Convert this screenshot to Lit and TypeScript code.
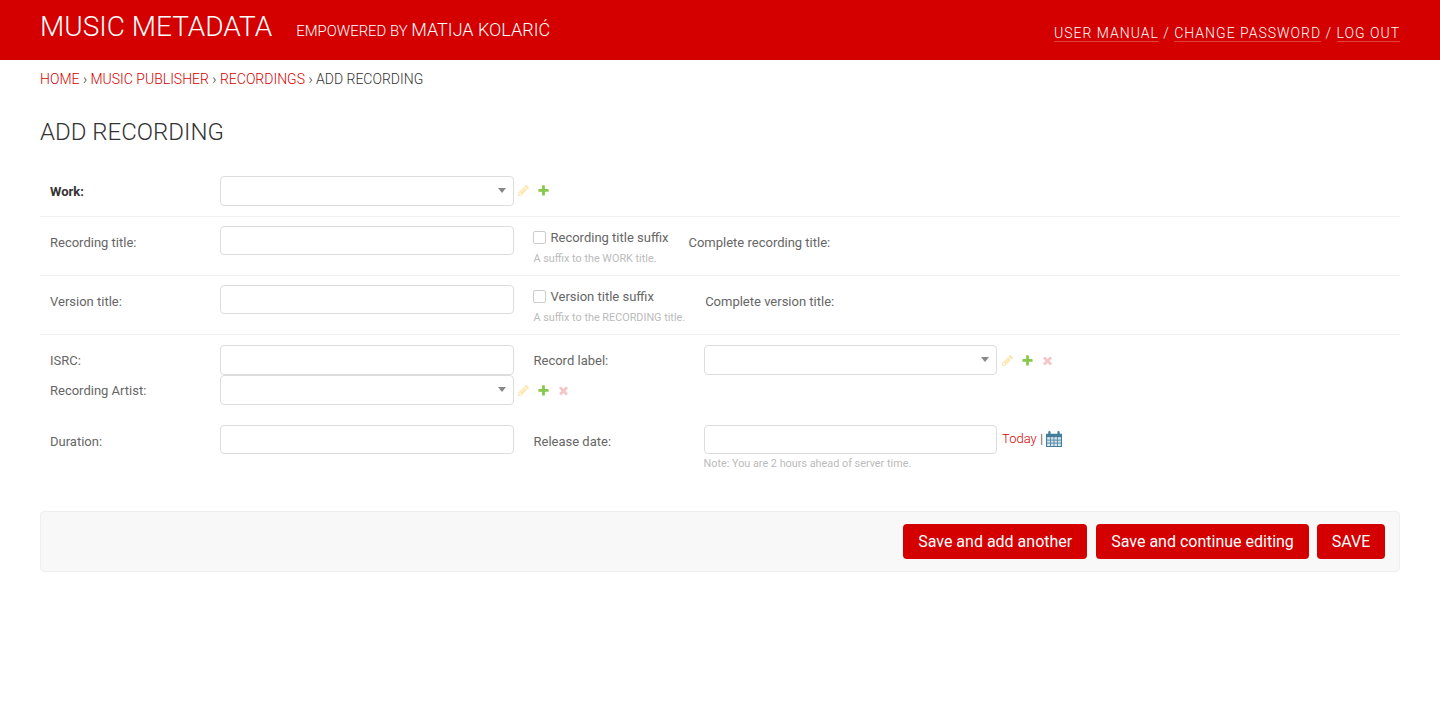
import { LitElement, html, css, svg } from "lit";
import { customElement } from "lit/decorators.js";

const pencil = svg`<path fill="#efb80b" d="M491 1536l91-91-235-235-91 91v107h128v128h107zm523-928q0-22-22-22-10 0-17 7l-542 542q-7 7-7 17 0 22 22 22 10 0 17-7l542-542q7-7 7-17zm-54-192l416 416-832 832h-416v-416zm683 96q0 53-37 90l-166 166-416-416 166-165q36-38 90-38 53 0 91 38l235 234q37 39 37 91z"/>`;
const plus = svg`<path fill="#70bf2b" d="M1600 796v192q0 40-28 68t-68 28h-416v416q0 40-28 68t-68 28h-192q-40 0-68-28t-28-68v-416h-416q-40 0-68-28t-28-68v-192q0-40 28-68t68-28h416v-416q0-40 28-68t68-28h192q40 0 68 28t28 68v416h416q40 0 68 28t28 68z"/>`;
const cross = svg`<path fill="#dd4646" d="M1490 1322q0 40-28 68l-136 136q-28 28-68 28t-68-28l-294-294-294 294q-28 28-68 28t-68-28l-136-136q-28-28-28-68t28-68l294-294-294-294q-28-28-28-68t28-68l136-136q28-28 68-28t68 28l294 294 294-294q28-28 68-28t68 28l136 136q28 28 28 68t-28 68l-294 294 294 294q28 28 28 68z"/>`;

@customElement("app-root")
export class AppRoot extends LitElement {
  static styles = css`
    :host {
      display: block;
      min-height: 707px;
      background: #fff;
      font-family: Roboto, sans-serif;
      font-size: 13px;
      color: #666;
    }
    a { text-decoration: none; }

    .header {
      height: 60px;
      box-sizing: border-box;
      padding: 0 40px;
      background: #d40000;
      color: #fff;
      display: flex;
      justify-content: space-between;
    }
    .branding { display: flex; align-items: baseline; padding-top: 9px; font-weight: 300; }
    .brand-title { font-size: 28px; line-height: 36px; margin-right: 24px; }
    .brand-sub { font-size: 14.9px; }
    .brand-name { font-size: 18px; }
    .tools {
      padding-top: 25px;
      font-size: 14px;
      line-height: 17px;
      font-weight: 300;
      letter-spacing: 1px;
      white-space: pre;
    }
    .tools a { color: #fff; border-bottom: 1px solid rgba(255, 255, 255, 0.25); }

    .crumbs {
      padding: 10px 40px;
      height: 18px;
      font-size: 14px;
      line-height: 18px;
      font-weight: 300;
      color: #333;
      text-transform: uppercase;
    }
    .crumbs a { color: #d40000; }

    .content { padding: 19px 40px 0; }
    h1 {
      margin: 0 0 19px;
      font-size: 24px;
      line-height: 30px;
      font-weight: 300;
      color: #333;
      text-transform: uppercase;
    }

    .row { display: flex; padding: 10px; border-bottom: 1px solid #f0f0f0; }
    .row.first { height: 30px; }
    .row.two-line { height: 39px; padding-top: 9px; }
    .row.plain { border: 0; padding-bottom: 0; padding-top: 0; }
    .row.spaced { margin-top: 20px; }
    .group { padding-top: 10px; }
    .label {
      width: 170px;
      height: 29px;
      box-sizing: border-box;
      flex: none;
      line-height: 30px;
      padding-top: 1px;
    }
    .two-line .label { padding-top: 2px; }
    .label.low { padding-top: 2px; }
    .label.required { font-weight: 700; color: #333; }

    .input, .select {
      width: 293.5px;
      height: 29px;
      box-sizing: border-box;
      flex: none;
      border: 1px solid #ddd;
      border-radius: 4px;
      background: #fff;
      padding: 0 6px;
      margin: 0;
      display: block;
    }
    .input.tall, .select { height: 30px; }
    .select { position: relative; }
    .select::after {
      content: "";
      position: absolute;
      right: 7px;
      top: 11px;
      border: 4px solid transparent;
      border-top: 5px solid #888;
      border-bottom: 0;
    }

    .icons { display: flex; align-items: center; height: 30px; margin-left: 3.5px; gap: 7px; }
    .first .icons { margin-top: -1px; }
    .icons svg { display: block; width: 13px; height: 13px; }
    .icons .edit, .icons .del { opacity: 0.3; }
    .icons .add { opacity: 0.85; }

    .suffix { margin-left: 20px; flex: none; }
    .check { display: flex; align-items: center; height: 22px; color: #666; }
    .check input {
      appearance: none;
      width: 13px;
      height: 13px;
      margin: 0 4.5px 0 -0.5px;
      border: 1px solid #ccc;
      border-radius: 2px;
      background: #fff;
    }
    .help { font-size: 10.83px; line-height: 14px; margin-top: 4px; color: #bbb; font-weight: 400; }
    .complete { line-height: 30px; margin-left: 20px; padding-top: 2px; }

    .side-label {
      width: 170px;
      height: 29px;
      box-sizing: border-box;
      flex: none;
      margin-left: 20px;
      line-height: 30px;
      padding-top: 1px;
    }
    .side-label.low { padding-top: 2px; }
    .date-col { flex: none; }
    .date-row { display: flex; align-items: center; height: 29px; }
    .today { margin: -2px 0 0 5px; display: flex; align-items: center; gap: 3.25px; color: #666; }
    .today a { color: #d40000; font-weight: 300; }
    .today svg { display: block; width: 16px; height: 16px; }
    .note { margin-top: 3px; }

    .submit {
      margin-top: 40px;
      height: 61px;
      box-sizing: border-box;
      background: #f8f8f8;
      border: 1px solid #eee;
      border-radius: 4px;
      display: flex;
      justify-content: flex-end;
      align-items: flex-start;
      gap: 8px;
      padding: 12px 13.6px 0 0;
    }
    .btn {
      height: 35px;
      box-sizing: border-box;
      padding: 0 15px;
      border: 0;
      border-radius: 4px;
      background: #d40000;
      color: #fff;
      font: 400 16px Roboto, sans-serif;
    }
    .btn.spaced { margin-right: 1px; }
  `;

  private icons(withDelete: boolean) {
    return html`<div class="icons">
      <svg class="edit" viewBox="0 0 1792 1792">${pencil}</svg>
      <svg class="add" viewBox="0 0 1792 1792">${plus}</svg>
      ${withDelete ? html`<svg class="del" viewBox="0 0 1792 1792">${cross}</svg>` : ""}
    </div>`;
  }

  render() {
    return html`
      <div class="header">
        <div class="branding">
          <div class="brand-title">MUSIC METADATA</div>
          <div class="brand-sub">EMPOWERED BY <span class="brand-name">MATIJA KOLARIĆ</span></div>
        </div>
        <div class="tools"><a href="#">USER MANUAL</a> / <a href="#">CHANGE PASSWORD</a> / <a href="#">LOG OUT</a></div>
      </div>
      <div class="crumbs">
        <a href="#">Home</a> › <a href="#">Music Publisher</a> › <a href="#">Recordings</a> › Add recording
      </div>
      <div class="content">
        <h1>Add recording</h1>

        <div class="row first">
          <div class="label required">Work:</div>
          <div class="select"></div>
          ${this.icons(false)}
        </div>

        <div class="row two-line">
          <div class="label">Recording title:</div>
          <input class="input" />
          <div class="suffix">
            <label class="check"><input type="checkbox" />Recording title suffix</label>
            <div class="help">A suffix to the WORK title.</div>
          </div>
          <div class="complete">Complete recording title:</div>
        </div>

        <div class="row two-line">
          <div class="label">Version title:</div>
          <input class="input" />
          <div class="suffix">
            <label class="check"><input type="checkbox" />Version title suffix</label>
            <div class="help">A suffix to the RECORDING title.</div>
          </div>
          <div class="complete">Complete version title:</div>
        </div>

        <div class="group">
          <div class="row plain">
            <div class="label">ISRC:</div>
            <input class="input tall" />
            <div class="side-label">Record label:</div>
            <div class="select"></div>
            ${this.icons(true)}
          </div>
          <div class="row plain">
            <div class="label">Recording Artist:</div>
            <div class="select"></div>
            ${this.icons(true)}
          </div>
          <div class="row plain spaced">
            <div class="label low">Duration:</div>
            <input class="input" />
            <div class="side-label low">Release date:</div>
            <div class="date-col">
              <div class="date-row">
                <input class="input" />
                <div class="today">
                  <a href="#">Today</a> |
                  <svg viewBox="1 0.2 14 16.3" preserveAspectRatio="none">
                    <path fill="#447e9b" d="M1 3h2V1.2a1 1 0 0 1 2 0V3h6V1.2a1 1 0 0 1 2 0V3h2v13.5H1z"/>
                    <path fill="#dbe7ee" d="M2 6.5h12v9H2z"/>
                    <path stroke="#447e9b" stroke-width=".8" d="M5 6.5v9M8 6.5v9M11 6.5v9M2 9.5h12M2 12.5h12"/>
                  </svg>
                </div>
              </div>
              <div class="help note">Note: You are 2 hours ahead of server time.</div>
            </div>
          </div>
        </div>

        <div class="submit">
          <button class="btn spaced">Save and add another</button>
          <button class="btn">Save and continue editing</button>
          <button class="btn">SAVE</button>
        </div>
      </div>
    `;
  }
}
